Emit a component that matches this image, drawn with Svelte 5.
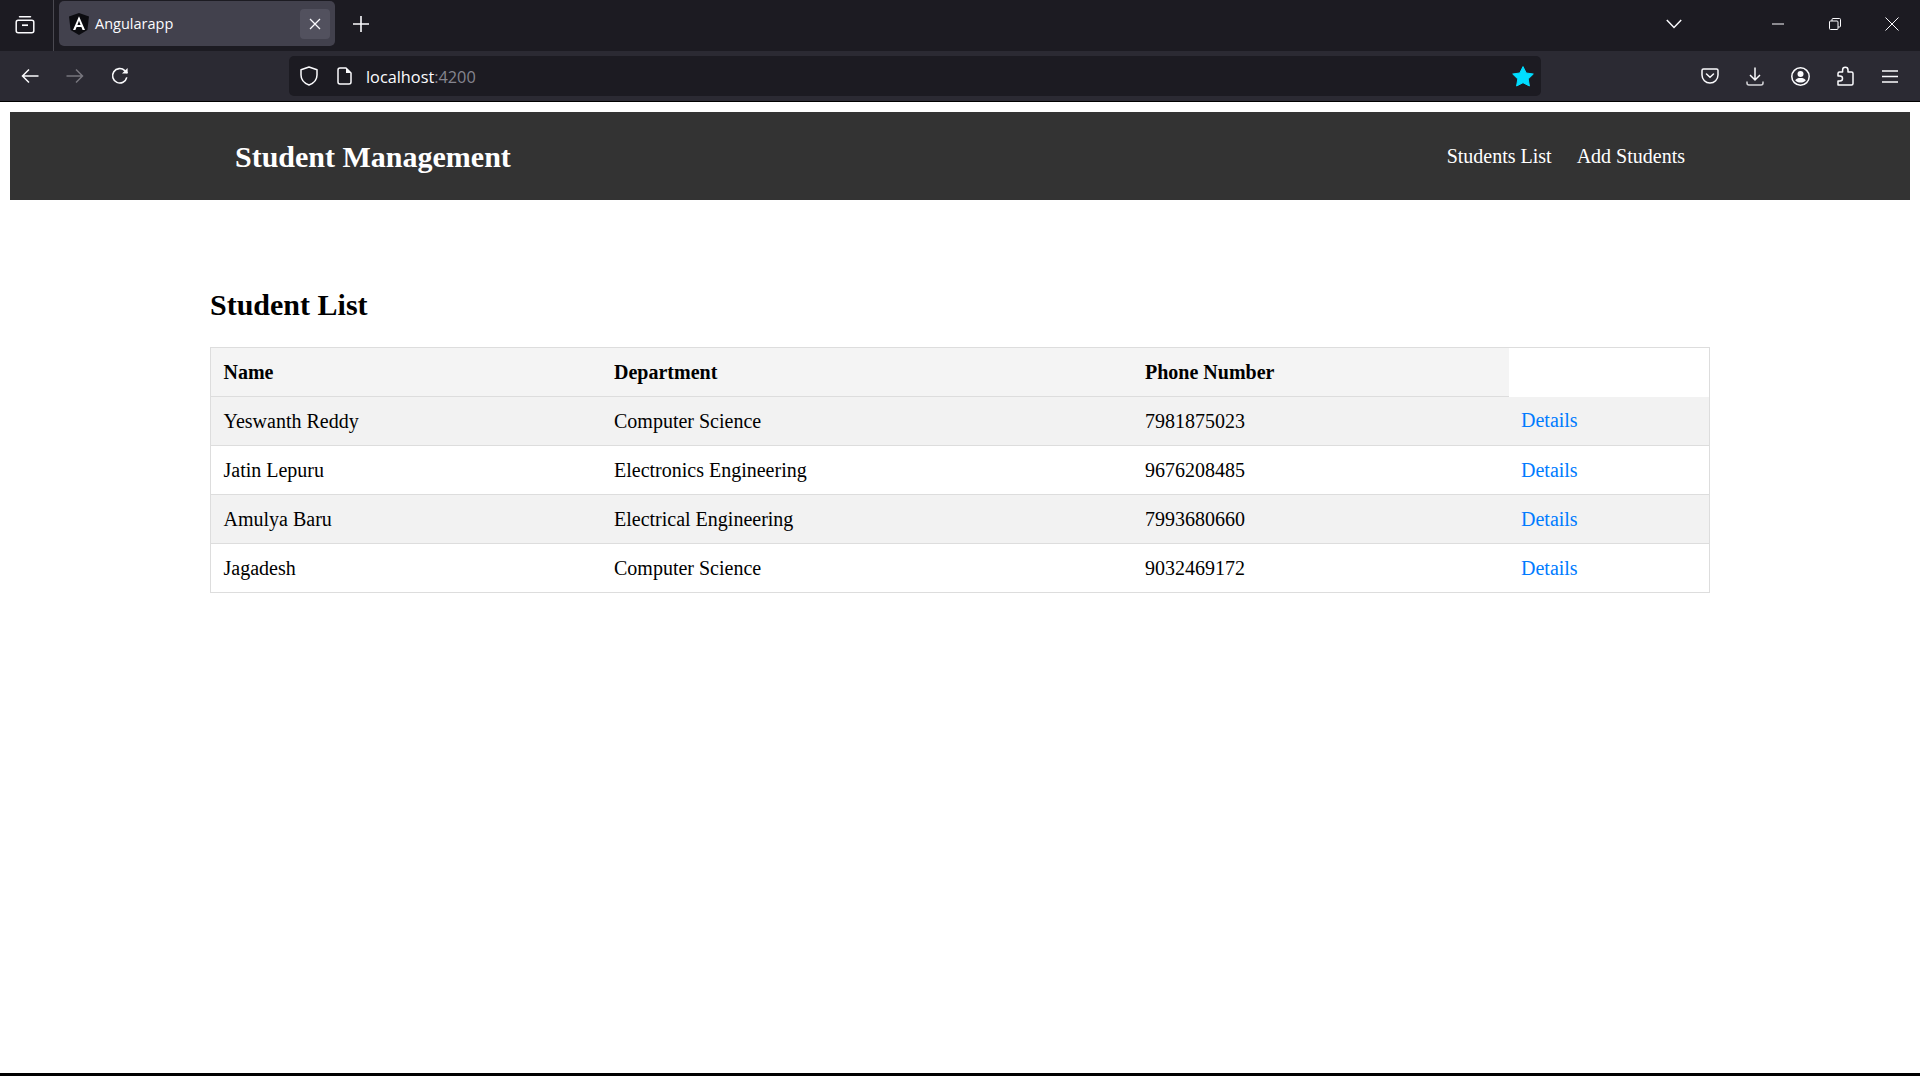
<script lang="ts">
  const students = [
    { name: "Yeswanth Reddy", department: "Computer Science", phone: "7981875023" },
    { name: "Jatin Lepuru", department: "Electronics Engineering", phone: "9676208485" },
    { name: "Amulya Baru", department: "Electrical Engineering", phone: "7993680660" },
    { name: "Jagadesh", department: "Computer Science", phone: "9032469172" },
  ];
</script>

<div class="page">
  <div class="browser">
    <div class="tabbar">
      <button class="tabs-btn" type="button" aria-label="List all tabs">
        <svg width="20" height="20" viewBox="0 0 20 20" fill="none" stroke="#fbfbfe" stroke-width="1.5">
          <rect x="1.2" y="5.2" width="17.6" height="12.6" rx="2" />
          <path d="M4.5 1.8h11" stroke-linecap="round" />
          <path d="M7 10.2h6" stroke-width="1.7" />
        </svg>
      </button>
      <span class="tab-sep"></span>
      <div class="tab">
        <svg class="favicon" width="20" height="22" viewBox="0 0 20 22">
          <path d="M10 0 20 3.6 18.4 17 10 22 1.6 17 0 3.6Z" fill="#0c0c10" />
          <path d="M10 3.2 4 17h2.4l1.2-3.1h4.8l1.2 3.1H16ZM8.4 11.9 10 7.8l1.6 4.1Z" fill="#fff" />
        </svg>
        <span class="tab-title">Angularapp</span>
        <span class="tab-close">
          <svg width="12" height="12" viewBox="0 0 12 12" stroke="#fbfbfe" stroke-width="1.3">
            <path d="M1 1 11 11M11 1 1 11" />
          </svg>
        </span>
      </div>
      <svg class="newtab" width="16" height="16" viewBox="0 0 16 16" stroke="#fbfbfe" stroke-width="1.6">
        <path d="M8 0v16M0 8h16" />
      </svg>
      <span class="spacer"></span>
      <svg class="chev" width="16" height="10" viewBox="0 0 16 10" fill="none" stroke="#fbfbfe" stroke-width="1.5">
        <path d="M.8 1 8 8.4 15.2 1" />
      </svg>
      <div class="winbtns">
        <svg width="12" height="12" viewBox="0 0 12 12" stroke="#fbfbfe" stroke-width="1">
          <path d="M0 6h12" />
        </svg>
        <svg width="12" height="12" viewBox="0 0 12 12" fill="none" stroke="#fbfbfe" stroke-width="1">
          <rect x=".5" y="3" width="8.5" height="8.5" rx="1" />
          <path d="M3 3V1.5a1 1 0 0 1 1-1h6.500a1 1 0 0 1 1 1V8a1 1 0 0 1-1 1H9" />
        </svg>
        <svg class="win-close" width="14" height="14" viewBox="0 0 14 14" stroke="#fbfbfe" stroke-width="1">
          <path d="M.5.500 13.500 13.500M13.500.500 .5 13.500" />
        </svg>
      </div>
    </div>

    <div class="toolbar">
      <div class="nav-icons">
        <svg width="18" height="16" viewBox="0 0 18 16" fill="none" stroke="#fbfbfe" stroke-width="1.500">
          <path d="M17.500 8H1.500M8 1.500 1.500 8 8 14.500" />
        </svg>
        <svg width="18" height="16" viewBox="0 0 18 16" fill="none" stroke="#77767e" stroke-width="1.500">
          <path d="M.5 8h16M10 1.500 16.500 8 10 14.500" />
        </svg>
        <svg width="18" height="18" viewBox="0 0 18 18" fill="none" stroke="#fbfbfe" stroke-width="1.600">
          <path d="M15.800 10.400A7.200 7.200 0 1 1 13.800 3.600L16.400 6" />
          <path d="M16.600 1v5.600H11" fill="#fbfbfe" stroke="none" />
        </svg>
      </div>
      <div class="urlbar">
        <svg width="18" height="20" viewBox="0 0 18 20" fill="none" stroke="#fbfbfe" stroke-width="1.500">
          <path d="M9 1 17 3.800V9c0 5-3.500 8.300-8 10C4.500 17.300 1 14 1 9V3.800Z" stroke-linejoin="round" />
        </svg>
        <svg class="page-icon" width="15" height="18" viewBox="0 0 15 18" fill="none" stroke="#fbfbfe" stroke-width="1.500">
          <path d="M3 1h6l5 5v9a2 2 0 0 1-2 2H3a2 2 0 0 1-2-2V3a2 2 0 0 1 2-2Z" stroke-linejoin="round" />
          <path d="M9 1v5h5Z" fill="#fbfbfe" stroke="none" />
        </svg>
        <span class="url">localhost<span class="port">:4200</span></span>
        <span class="spacer"></span>
        <svg class="star" width="22" height="21" viewBox="0 0 22 21" fill="#00ddff">
          <path d="M11 .6 14.200 7l7.100 1-5.100 5 1.200 7-6.400-3.300L4.600 20l1.200-7L.7 8l7.100-1Z" stroke="#00ddff" stroke-width="1" stroke-linejoin="round" />
        </svg>
      </div>
      <div class="tool-icons">
        <svg width="18" height="16" viewBox="0 0 18 16" fill="none" stroke="#fbfbfe" stroke-width="1.500">
          <path d="M2.500 1h13A1.500 1.500 0 0 1 17 2.500V7a8 8 0 0 1-16 0V2.500A1.500 1.500 0 0 1 2.500 1Z" />
          <path d="M5.500 6 9 9.300 12.500 6" stroke-linecap="round" />
        </svg>
        <svg width="18" height="19" viewBox="0 0 18 19" fill="none" stroke="#fbfbfe" stroke-width="1.500">
          <path d="M9 .5v12M4 8l5 5 5-5" />
          <path d="M1 14.500v1.500a2 2 0 0 0 2 2h12a2 2 0 0 0 2-2v-1.500" stroke="#d5d5d9" />
        </svg>
        <svg width="19" height="19" viewBox="0 0 19 19" fill="none" stroke="#fbfbfe" stroke-width="1.500">
          <circle cx="9.500" cy="9.500" r="8.700" />
          <circle cx="9.500" cy="7" r="3" fill="#fbfbfe" stroke="none" />
          <path d="M4.200 13.200c1-1.600 2.800-2.200 5.300-2.200s4.300.6 5.300 2.200c-1.200 1.600-3 2.400-5.300 2.400s-4.100-.8-5.300-2.400Z" fill="#fbfbfe" stroke="none" />
        </svg>
        <svg width="17" height="20" viewBox="0 0 17 20" fill="none" stroke="#fbfbfe" stroke-width="1.500">
          <path d="M1 19h13.500a1.500 1.500 0 0 0 1.500-1.500V7.500A1.500 1.500 0 0 0 14.500 6H11V4a2.700 2.700 0 0 0-5.400 0v2H2.500A1.500 1.500 0 0 0 1 7.500V10h2a2.500 2.500 0 0 1 0 5H1Z" stroke-linejoin="round" />
        </svg>
        <svg class="menu" width="16" height="13" viewBox="0 0 16 13" stroke="#fbfbfe" stroke-width="1.500">
          <path d="M0 1h16M0 6.500h16M0 12h16" />
        </svg>
      </div>
    </div>
  </div>

  <div class="site">
    <header class="site-header">
      <a class="brand" href="#top">Student Management</a>
      <nav class="site-nav">
        <a href="#list">Students List</a>
        <a href="#add">Add Students</a>
      </nav>
    </header>

    <main class="content">
      <h2>Student List</h2>
      <table>
        <colgroup>
          <col class="col-name" />
          <col class="col-dept" />
          <col class="col-phone" />
          <col />
        </colgroup>
        <thead>
          <tr>
            <th>Name</th>
            <th>Department</th>
            <th>Phone Number</th>
            <td class="blank"></td>
          </tr>
        </thead>
        <tbody>
          {#each students as student (student.phone)}
            <tr>
              <td>{student.name}</td>
              <td>{student.department}</td>
              <td>{student.phone}</td>
              <td><a href="#details">Details</a></td>
            </tr>
          {/each}
        </tbody>
      </table>
    </main>
  </div>

  <div class="taskbar-edge"></div>
</div>

<style>
  :global(body) {
    margin: 0;
    background: #fff;
  }

  .page {
    display: flex;
    flex-direction: column;
    min-height: 100vh;
    font-family: "Liberation Serif", "Times New Roman", serif;
    color: #000;
  }

  .browser {
    font-family: "Open Sans", "Noto Sans", sans-serif;
    border-bottom: 1px solid #000;
  }

  .tabbar {
    display: flex;
    align-items: center;
    height: 51px;
    background: #1c1b22;
  }

  .tabs-btn {
    display: flex;
    margin-left: 15px;
    padding: 0;
    background: none;
    border: 0;
    transform: translateY(-1px);
  }

  .tab-sep {
    align-self: stretch;
    width: 1px;
    margin-left: 18px;
    background: #4a4951;
  }

  .tab {
    display: flex;
    align-items: center;
    width: 276px;
    height: 45px;
    margin-left: 5px;
    padding: 0 5px 0 10px;
    box-sizing: border-box;
    background: #42414d;
    border-radius: 5px;
    transform: translateY(-2px);
  }

  .tab-title {
    margin-left: 6px;
    color: #fbfbfe;
    font-size: 14.5px;
  }

  .tab-close {
    display: flex;
    align-items: center;
    justify-content: center;
    width: 30px;
    height: 30px;
    margin-left: auto;
    background: #52515e;
    border-radius: 4px;
  }

  .newtab {
    margin-left: 18px;
    transform: translateY(-2px);
  }

  .spacer {
    flex: 1;
  }

  .chev {
    margin-right: 90px;
    transform: translateY(-2px);
  }

  .winbtns {
    display: flex;
    align-items: center;
    gap: 45px;
    margin-right: 21px;
    transform: translateY(-2px);
  }

  .win-close {
    margin-left: -1px;
  }

  .toolbar {
    display: flex;
    align-items: center;
    height: 50px;
    background: #2b2a33;
  }

  .nav-icons {
    display: flex;
    align-items: center;
    gap: 27px;
    width: 289px;
    padding-left: 21px;
    box-sizing: border-box;
  }

  .urlbar {
    display: flex;
    align-items: center;
    width: 1252px;
    height: 40px;
    padding: 0 7px 0 11px;
    box-sizing: border-box;
    background: #1c1b22;
    border-radius: 5px;
  }

  .page-icon {
    margin-left: 19px;
  }

  .url {
    margin-top: 2px;
    margin-left: 14px;
    color: #fbfbfe;
    font-size: 16.3px;
  }

  .port {
    color: #85858f;
  }

  .tool-icons {
    display: flex;
    align-items: center;
    gap: 27px;
    margin-left: 160px;
  }

  .menu {
    margin-left: 1px;
  }

  .site {
    flex: 1;
  }

  .site-header {
    display: flex;
    align-items: center;
    justify-content: space-between;
    height: 88px;
    margin: 10px 10px 0;
    padding: 0 225px;
    background: #333;
  }

  .brand {
    padding-top: 2px;
    color: #fff;
    font-size: 30px;
    font-weight: 700;
    text-decoration: none;
  }

  .site-nav {
    display: flex;
    gap: 25px;
  }

  .site-nav a {
    color: #fff;
    font-size: 20px;
    text-decoration: none;
  }

  .content {
    width: 1500px;
    margin: 0 auto;
    padding-top: 88px;
  }

  h2 {
    margin: 0 0 25px;
    font-size: 30px;
    line-height: 34px;
  }

  table {
    width: 100%;
    table-layout: fixed;
    border-collapse: collapse;
    border: 1px solid #ddd;
    font-size: 20px;
  }

  .col-name {
    width: 391px;
  }

  .col-dept {
    width: 531px;
  }

  .col-phone {
    width: 376px;
  }

  th,
  td {
    height: 49px;
    padding: 0 12.5px;
    box-sizing: border-box;
    border-bottom: 1px solid #ddd;
    text-align: left;
  }

  th {
    background: #f4f4f4;
    font-weight: 700;
  }

  td.blank {
    background: #fff;
    border-bottom: 0;
  }

  tbody tr:nth-child(odd) {
    background: #f2f2f2;
  }

  td a {
    color: #007bff;
    text-decoration: none;
  }

  .taskbar-edge {
    height: 3px;
    background: #000;
  }
</style>
